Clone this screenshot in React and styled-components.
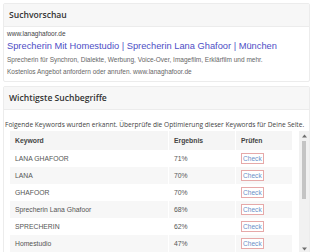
import React from 'react';
import styled, { createGlobalStyle } from 'styled-components';

const Global = createGlobalStyle`
  html, body { margin: 0; padding: 0; background: #fff; }
  body { font-family: "Liberation Sans", Arial, sans-serif; color: #333; }
`;

const Page = styled.div`
  width: 313px;
  height: 252px;
  overflow: hidden;
  padding: 3px 3px 0 3px;
  box-sizing: border-box;
  display: flex;
  flex-direction: column;
  gap: 4px;
`;

const Card = styled.section`
  border: 1px solid #ececec;
  border-radius: 2px;
  background: #fff;
  display: flex;
  flex-direction: column;
  flex: ${p => (p.grow ? '1 0 auto' : 'none')};
  height: ${p => (p.grow ? '170px' : 'auto')};
  box-sizing: border-box;
`;

const CardHead = styled.h3`
  margin: 0;
  padding: 5px 5px 4px;
  background: #f7f7f7;
  border-bottom: 1px solid #ececec;
  font-family: "Open Sans", sans-serif;
  font-weight: 600;
  font-size: 8.6px;
  line-height: 13px;
  color: #333;
`;

const Preview = styled.div`
  padding: 2px 3px 3px;
`;

const Url = styled.div`
  font-size: 6.5px;
  line-height: 9px;
  color: #444;
`;

const Title = styled.div`
  font-size: 9.3px;
  line-height: 14px;
  color: #4e4ec6;
  margin: 1px 0;
`;

const Desc = styled.div`
  font-size: 6.5px;
  line-height: 12px;
  color: #666;
`;

const Body = styled.div`
  padding: 9px 0 0 1px;
  display: flex;
  flex-direction: column;
  min-height: 0;
  flex: 1;
`;

const Intro = styled.p`
  margin: 0;
  font-family: "Open Sans", sans-serif;
  font-size: 6.6px;
  line-height: 12px;
  color: #444;
  white-space: nowrap;
`;

const ListArea = styled.div`
  margin-left: 5px;
  height: 122px;
  display: flex;
  gap: 7px;
`;

const Clip = styled.div`
  width: 282px;
  overflow: hidden;
`;

const Scrollbar = styled.div`
  width: 10px;
  background: #f1f1f1;
  display: flex;
  flex-direction: column;
  align-items: center;
`;

const Arrow = styled.div`
  height: 9px;
  display: flex;
  align-items: center;
  justify-content: center;
`;

const Thumb = styled.div`
  width: 4px;
  height: 58px;
  margin-top: 1px;
  background: #c4c4c4;
`;

const Spacer = styled.div`
  flex: 1;
`;

const Table = styled.table`
  width: 282px;
  border-collapse: collapse;
  table-layout: fixed;
  font-size: 6.8px;
  color: #555;
`;

const Th = styled.th`
  width: ${p => p.w}px;
  text-align: left;
  font-weight: bold;
  background: #f5f5f5;
  color: #444;
  height: 19px;
  padding: 0 5px;
  border-right: 1px solid #fff;
`;

const Row = styled.tr`
  background: ${p => (p.shade ? '#f7f7f7' : '#fff')};
`;

const Td = styled.td`
  height: 17px;
  padding: 0 5px;
  border-right: 1px solid #fff;
`;

const CheckBtn = styled.span`
  display: inline-block;
  border: 1px solid #e6a9a9;
  color: #6a8fc7;
  font-size: 6.6px;
  line-height: 9px;
  padding: 0 1px;
  background: #fff;
`;

const rows = [
  ['LANA GHAFOOR', '71%'],
  ['LANA', '70%'],
  ['GHAFOOR', '70%'],
  ['Sprecherin Lana Ghafoor', '68%'],
  ['SPRECHERIN', '62%'],
  ['Homestudio', '47%'],
];

const Tri = ({ down }) => (
  <svg width="5" height="4" viewBox="0 0 5 4">
    <polygon points={down ? '0,0.5 5,0.5 2.5,3.5' : '0,3.5 5,3.5 2.5,0.5'} fill="#6e6e6e" />
  </svg>
);

export default function App() {
  return (
    <>
      <Global />
      <Page>
        <Card>
          <CardHead>Suchvorschau</CardHead>
          <Preview>
            <Url>www.lanaghafoor.de</Url>
            <Title>Sprecherin Mit Homestudio | Sprecherin Lana Ghafoor | München</Title>
            <Desc>Sprecherin für Synchron, Dialekte, Werbung, Voice-Over, Imagefilm, Erklärfilm und mehr.</Desc>
            <Desc>Kostenlos Angebot anfordern oder anrufen. www.lanaghafoor.de</Desc>
          </Preview>
        </Card>
        <Card grow>
          <CardHead>Wichtigste Suchbegriffe</CardHead>
          <Body>
            <Intro>Folgende Keywords wurden erkannt. Überprüfe die Optimierung dieser Keywords für Deine Seite.</Intro>
            <ListArea>
              <Clip>
                <Table>
                  <thead>
                    <tr>
                      <Th w={148}>Keyword</Th>
                      <Th w={56}>Ergebnis</Th>
                      <Th w={48}>Prüfen</Th>
                    </tr>
                  </thead>
                  <tbody>
                    {rows.map(([k, v], i) => (
                      <Row key={k} shade={i % 2 === 1}>
                        <Td>{k}</Td>
                        <Td>{v}</Td>
                        <Td><CheckBtn>Check</CheckBtn></Td>
                      </Row>
                    ))}
                  </tbody>
                </Table>
              </Clip>
              <Scrollbar>
                <Arrow><Tri /></Arrow>
                <Thumb />
                <Spacer />
                <Arrow><Tri down /></Arrow>
              </Scrollbar>
            </ListArea>
          </Body>
        </Card>
      </Page>
    </>
  );
}
